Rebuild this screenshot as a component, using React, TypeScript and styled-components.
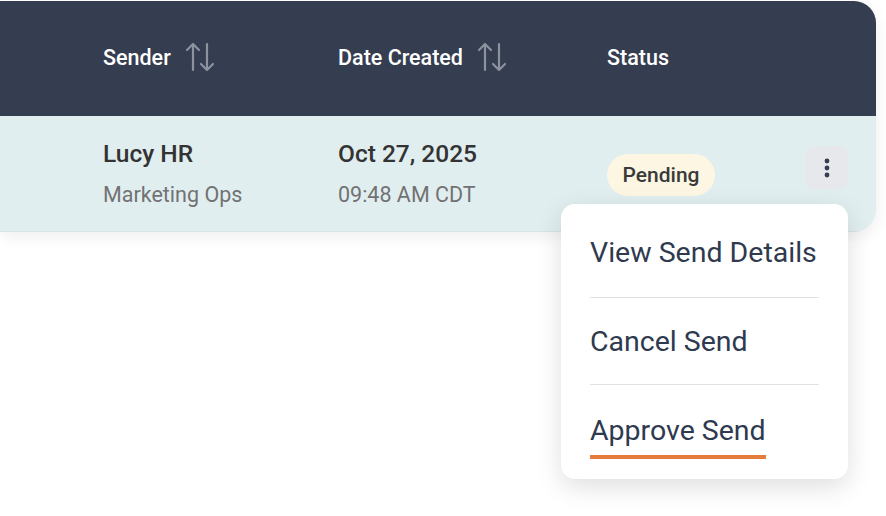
import React from 'react';
import styled, { createGlobalStyle } from 'styled-components';

const GlobalStyle = createGlobalStyle`
  html, body {
    margin: 0;
    padding: 0;
    background: #ffffff;
    font-family: Roboto, "Noto Sans", "Liberation Sans", sans-serif;
  }
`;

const Page = styled.div`
  position: relative;
  width: 886px;
  height: 516px;
  padding-top: 1px;
  box-sizing: border-box;
`;

const Table = styled.div`
  width: 876px;
  border-radius: 0 22px 22px 0;
  overflow: hidden;
  box-shadow: 2px 6px 14px rgba(0, 0, 0, 0.06);
`;

const columns = '103px 235px 269px 198px 43px 28px';

const HeaderRow = styled.div`
  display: grid;
  grid-template-columns: ${columns};
  align-items: center;
  height: 115px;
  background: #353d50;
  color: #ffffff;
`;

const HeadCell = styled.div`
  display: flex;
  align-items: center;
  gap: 14px;
  font-size: 21.5px;
  font-weight: 500;
  padding-bottom: 3px;
`;

const SortIcon = () => (
  <svg width="30" height="30" viewBox="0 0 30 30" fill="none" stroke="#8c929e" strokeWidth="2.2" strokeLinecap="round" strokeLinejoin="round">
    <path d="M8 28V2M2 8l6-6 6 6" />
    <path d="M22 2v26M16 22l6 6 6-6" />
  </svg>
);

const BodyRow = styled.div`
  display: grid;
  grid-template-columns: ${columns};
  align-items: center;
  height: 115px;
  background: #e1eef0;
  border-bottom: 1px solid #d7e3e6;
`;

const Cell = styled.div`
  display: flex;
  flex-direction: column;
  gap: 14px;
`;

const Primary = styled.div`
  font-size: 24.5px;
  line-height: 28px;
  font-weight: 500;
  color: #333333;
`;

const Secondary = styled.div`
  font-size: 21.5px;
  line-height: 25px;
  color: #727272;
`;

const Badge = styled.span`
  display: inline-flex;
  align-items: center;
  justify-content: center;
  width: 108px;
  height: 42px;
  border-radius: 21px;
  background: #fcf6e3;
  color: #3a3a3a;
  font-size: 21px;
  font-weight: 500;
  margin-top: 2px;
`;

const KebabButton = styled.button`
  display: flex;
  align-items: center;
  justify-content: center;
  width: 43px;
  height: 43px;
  border: none;
  border-radius: 9px;
  background: #e6e8eb;
  padding: 0;
  margin-bottom: 12px;
`;

const Menu = styled.div`
  position: absolute;
  left: 561px;
  top: 204px;
  width: 287px;
  height: 275px;
  box-sizing: border-box;
  background: #ffffff;
  border-radius: 14px;
  box-shadow: 0 8px 26px rgba(0, 0, 0, 0.13);
  padding: 0 29px;
  display: flex;
  flex-direction: column;
`;

const MenuItem = styled.div<{ $height: number; $offset: number; $divider?: boolean }>`
  height: ${(p) => p.$height}px;
  display: flex;
  align-items: center;
  font-size: 28.5px;
  color: #2f3a4f;
  border-bottom: ${(p) => (p.$divider ? '1px solid #e2e2e2' : 'none')};
  padding-top: ${(p) => p.$offset}px;
  box-sizing: border-box;
`;

const LastItem = styled.div`
  padding-top: 29px;
  font-size: 28.5px;
  color: #2f3a4f;
`;

const Underlined = styled.span`
  display: inline-block;
  line-height: 1;
  padding-bottom: 9.5px;
  border-bottom: 4px solid #e57c3a;
`;

export default function App() {
  return (
    <Page>
      <GlobalStyle />
      <Table>
        <HeaderRow>
          <div />
          <HeadCell>
            Sender <SortIcon />
          </HeadCell>
          <HeadCell>
            Date Created <SortIcon />
          </HeadCell>
          <HeadCell>Status</HeadCell>
          <div />
          <div />
        </HeaderRow>
        <BodyRow>
          <div />
          <Cell>
            <Primary>Lucy HR</Primary>
            <Secondary>Marketing Ops</Secondary>
          </Cell>
          <Cell>
            <Primary>Oct 27, 2025</Primary>
            <Secondary>09:48 AM CDT</Secondary>
          </Cell>
          <div>
            <Badge>Pending</Badge>
          </div>
          <KebabButton aria-label="More actions">
            <svg width="6" height="20" viewBox="0 0 6 20" fill="#353d50">
              <circle cx="3" cy="3" r="2.4" />
              <circle cx="3" cy="10" r="2.4" />
              <circle cx="3" cy="17" r="2.4" />
            </svg>
          </KebabButton>
          <div />
        </BodyRow>
      </Table>
      <Menu>
        <MenuItem $height={94} $offset={4} $divider>View Send Details</MenuItem>
        <MenuItem $height={87} $offset={0} $divider>Cancel Send</MenuItem>
        <LastItem>
          <Underlined>Approve Send</Underlined>
        </LastItem>
      </Menu>
    </Page>
  );
}
